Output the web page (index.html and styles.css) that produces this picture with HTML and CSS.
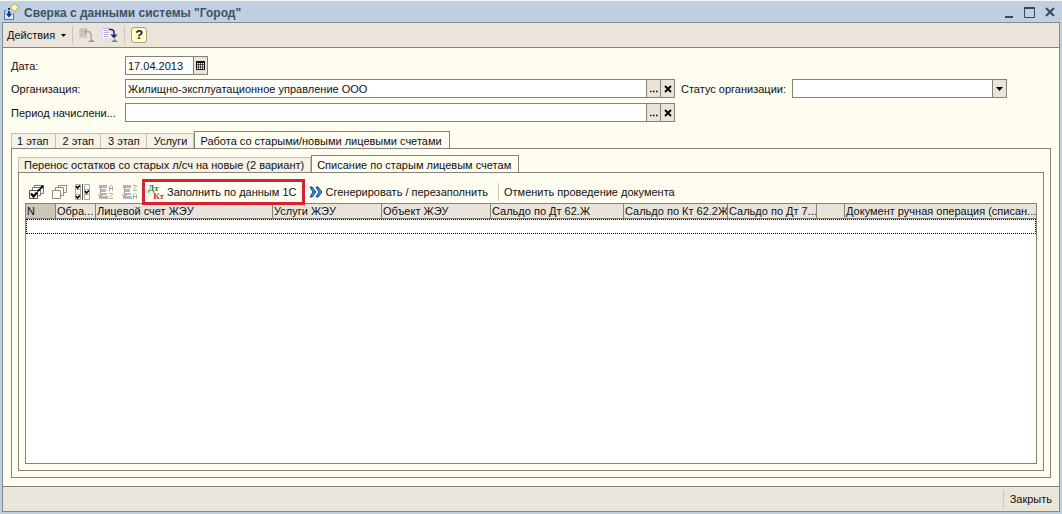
FILE: index.html
```
<!DOCTYPE html>
<html lang="ru">
<head>
<meta charset="utf-8">
<title>Сверка с данными системы "Город"</title>
<link rel="stylesheet" href="styles.css">
</head>
<body>
<div class="window">
  <header class="titlebar">
    <svg class="title-icon" width="18" height="18" viewBox="0 0 18 18" aria-hidden="true">
      <path d="M11.500 .5l4.500 4-4.500 4-4.500-4z" fill="#fbf8a0" stroke="#a8a36c"/>
      <path d="M3 7.500H1.500v9h9v-6" fill="none" stroke="#56779c"/>
      <path d="M2 10h8v6H2z" fill="#dfeaf7"/>
      <path d="M6 5v2M6 8v4" stroke="#0b3f8c" stroke-width="2"/>
      <path d="M2.500 10.500h7L6 14.500z" fill="#0b3f8c"/>
    </svg>
    <h1 class="title">Сверка с данными системы "Город"</h1>
    <button class="win-btn" aria-label="Свернуть"><svg width="12" height="12"><path d="M2 11h8" stroke="#37495a" stroke-width="2"/></svg></button>
    <button class="win-btn" aria-label="Развернуть"><svg width="12" height="12"><path d="M.5 2v9.500h10V2" fill="none" stroke="#37495a"/><path d="M0 2h11" stroke="#37495a" stroke-width="2"/></svg></button>
    <button class="win-btn" aria-label="Закрыть окно"><svg width="12" height="12"><path d="M1 2l8 8M9 2l-8 8" stroke="#37495a" stroke-width="2"/></svg></button>
  </header>
  <div class="frame">
    <div class="commandbar">
      <button class="menu-btn">Действия <svg width="5" height="3"><path d="M0 0h5L2.500 3z" fill="#000"/></svg></button>
      <span class="sep"></span>
      <button class="icon-btn" aria-label="Перейти назад" disabled>
        <svg width="16" height="16"><path d="M0 1h8v10H0z" fill="#d3cfca"/><path d="M1 2.500h5M1 4.500h3M1 6.500h5M1 8.500h6" stroke="#bdb9b6"/><path d="M6 4.500h2.500q3.500 0 3.500 3.500V12" fill="none" stroke="#aca7a5" stroke-width="1.500"/><path d="M8 1v7L4.500 4.500z" fill="#aca7a5"/><path d="M12.500 12l3.500 3H9z" fill="#a09b92"/></svg>
      </button>
      <button class="icon-btn" aria-label="Перейти">
        <svg width="16" height="16"><path d="M0 1h8v10H0z" fill="#fff"/><path d="M0 1.500h8M0 3.500h1m1 0h5M0 5.500h1m1 0h5M0 7.500h1m1 0h5M0 9.500h1m1 0h5" stroke="#b4b4d4"/><path d="M7 2.500h2q3 0 3 3V9" fill="none" stroke="#17278f" stroke-width="1.500"/><path d="M8.500 7.500h7L12 11.500z" fill="#17278f"/><path d="M12.500 12l3.500 3H9z" fill="#8a857a"/></svg>
      </button>
      <span class="sep"></span>
      <button class="help-btn" aria-label="Справка">?</button>
    </div>

    <main class="content">
      <form class="fields">
        <label class="label" for="date">Дата:</label>
        <div class="field date">
          <input id="date" type="text" value="17.04.2013">
          <button type="button" class="field-btn" aria-label="Календарь"><svg width="9" height="9"><path d="M.5 .5h8v8h-8z" fill="#fff" stroke="#111"/><path d="M0 1h9" stroke="#111" stroke-width="2"/><path d="M2.500 1v8M4.500 1v8M6.500 1v8M0 3.500h9M0 6h9" stroke="#111" stroke-width=".7"/></svg></button>
        </div>
        <label class="label row-org" for="org">Организация:</label>
        <div class="field">
          <input id="org" type="text" value="Жилищно-эксплуатационное управление ООО">
          <button type="button" class="field-btn" aria-label="Выбрать организацию"><svg width="8" height="9"><path d="M0 7.500h1.500M3 7.500h1.500M6 7.500h1.500" stroke="#000" stroke-width="1.500"/></svg></button>
          <button type="button" class="field-btn" aria-label="Очистить организацию"><svg width="8" height="9"><path d="M1 2l6 6M7 2l-6 6" stroke="#000" stroke-width="1.800"/></svg></button>
        </div>
        <label class="label label-status" for="status">Статус организации:</label>
        <div class="field">
          <select id="status"><option></option></select>
          <span class="field-btn"><svg width="7" height="4"><path d="M0 0h7L3.500 4z" fill="#000"/></svg></span>
        </div>
        <label class="label row-period" for="period">Период начислени...</label>
        <div class="field">
          <input id="period" type="text" value="">
          <button type="button" class="field-btn" aria-label="Выбрать период"><svg width="8" height="9"><path d="M0 7.500h1.500M3 7.500h1.500M6 7.500h1.500" stroke="#000" stroke-width="1.500"/></svg></button>
          <button type="button" class="field-btn" aria-label="Очистить период"><svg width="8" height="9"><path d="M1 2l6 6M7 2l-6 6" stroke="#000" stroke-width="1.800"/></svg></button>
        </div>
      </form>

      <div class="tabs" role="tablist">
        <button class="tab" role="tab">1 этап</button>
        <button class="tab" role="tab">2 этап</button>
        <button class="tab" role="tab">3 этап</button>
        <button class="tab" role="tab">Услуги</button>
        <button class="tab active" role="tab" aria-selected="true">Работа со старыми/новыми лицевыми счетами</button>
      </div>
      <section class="pane">
        <div class="tabs" role="tablist">
          <button class="tab" role="tab">Перенос остатков со старых л/сч на новые (2 вариант)</button>
          <button class="tab active" role="tab" aria-selected="true">Списание по старым лицевым счетам</button>
        </div>
        <section class="pane inner">
          <div class="toolbar">
            <button class="icon-btn" aria-label="Установить флажки">
              <svg width="16" height="16"><path d="M6.500 1.500h9v8h-9z" fill="#fff" stroke="#777"/><path d="M4.500 3.500h8v8h-8z" fill="#fff" stroke="#777"/><path d="M1.500 6.500h8v8h-8z" fill="#fff" stroke="#555"/><path d="M3 9.500l2.500 3L9 8.500M10 7l2-2M12.500 4.500L15 2" fill="none" stroke="#000" stroke-width="2.200"/></svg>
            </button>
            <button class="icon-btn" aria-label="Снять флажки">
              <svg width="16" height="16" fill="#fffcf0" stroke="#8c8c88"><path d="M7.500 1.500h8v7h-8z"/><path d="M4.500 3.500h8v8h-8z"/><path d="M1.500 6.500h8v8h-8z"/></svg>
            </button>
            <button class="icon-btn" aria-label="Инвертировать флажки">
              <svg width="16" height="16"><path d="M1.500 .5h5v5h-5zM1.500 5.500h5v5h-5zM1.500 10.500h5v5h-5zM10.500 .5h5v5h-5zM10.500 5.500h5v5h-5zM10.500 10.500h5v5h-5z" fill="#fff" stroke="#a8a8a4"/><path d="M8.500 0v16" stroke="#555"/><path d="M2 2l1.500 2L6 1.500M2 12l1.500 2L6 11.500M11 7l1.500 2L15 6.500" fill="none" stroke="#000" stroke-width="1.500"/></svg>
            </button>
            <button class="icon-btn" aria-label="Сортировать по возрастанию" disabled>
              <svg width="17" height="16"><path d="M2 1h8v3H2zM3 5h6v3H3zM3 9h7v2H3zM2 12h9v3H2z" fill="#b4b4be"/><path d="M3.500 1v11M1 10l2.500 3L6 10" stroke="#a0a0ac" fill="none"/><path d="M12.500 7V2.500l1-1h1l1 1V7M12.500 4.500h3M12 9.500h3.500v1l-3 3v1H16" fill="none" stroke="#aeaaa6"/></svg>
            </button>
            <button class="icon-btn" aria-label="Сортировать по убыванию" disabled>
              <svg width="17" height="16"><path d="M2 1h8v3H2zM3 5h6v3H3zM3 9h7v2H3zM2 12h9v3H2z" fill="#b4b4be"/><path d="M3.500 1v11M1 10l2.500 3L6 10" stroke="#a0a0ac" fill="none"/><path d="M12 1.500h3.500v1l-3 3v1H16M12.500 15v-4.500l1-1h1l1 1V15M12.500 12.500h3" fill="none" stroke="#aeaaa6"/></svg>
            </button>
            <button class="text-btn highlight">
              <span class="dtkt" aria-hidden="true"><b class="dt">Дт</b><b class="kt">Кт</b></span>
              Заполнить по данным 1С
            </button>
            <button class="text-btn generate">
              <svg width="14" height="12"><path d="M1 1h2l4 5-4 5H1l3-5zM7 1h2l4 5-4 5H7l3-5z" fill="#2f9be0" stroke="#123a83"/></svg>
              Сгенерировать / перезаполнить
            </button>
            <span class="sep"></span>
            <button class="text-btn">Отменить проведение документа</button>
          </div>
          <div class="grid">
            <table class="table">
              <colgroup><col class="c-n"><col class="c-img"><col class="c-acc"><col class="c-mid"><col class="c-mid"><col class="c-dt"><col class="c-kt"><col class="c-dt7"><col class="c-gap"><col></colgroup>
              <thead><tr>
                <th class="current">N</th><th>Обра...</th><th>Лицевой счет ЖЭУ</th><th>Услуги ЖЭУ</th><th>Объект ЖЭУ</th><th>Сальдо по Дт 62.Ж</th><th>Сальдо по Кт 62.2Ж</th><th>Сальдо по Дт 7...</th><th></th><th>Документ ручная операция (списан...</th>
              </tr></thead>
              <tbody><tr><td colspan="10"></td></tr></tbody>
            </table>
          </div>
        </section>
      </section>
    </main>

    <footer class="footer">
      <span class="sep"></span>
      <button class="text-btn">Закрыть</button>
    </footer>
  </div>
</div>
</body>
</html>
```
FILE: styles.css
```
* { box-sizing: border-box; }

body {
  margin: 0;
  background: #c2d0de;
  color: #111;
  font: 11px/14px "Liberation Sans", Arial, sans-serif;
}

button, input, select {
  margin: 0;
  padding: 0;
  border: 0;
  border-radius: 0;
  background: none;
  color: inherit;
  font: inherit;
}

svg { display: block; flex: none; }

.window {
  display: flex;
  flex-direction: column;
  min-height: 100vh;
  padding: 0 2px 2px;
  border-top: 1px solid #f4f6f8;
  background: #c0cfdc;
}

.titlebar {
  display: flex;
  align-items: center;
  height: 21px;
  padding: 0 3px 0 1px;
  background: #c0d0e2;
}

.title {
  flex: 1;
  margin: 0 0 0 3px;
  padding-top: 2px;
  color: #3f5163;
  font-size: 12px;
  font-weight: bold;
}

.win-btn { margin-left: 9px; }

.frame {
  display: flex;
  flex: 1;
  flex-direction: column;
  border: 1px solid #7e8b90;
  background: #fffcf0;
}

.commandbar {
  display: flex;
  align-items: center;
  height: 25px;
  padding: 0 4px;
  border-bottom: 1px solid #85827a;
  background: #ebe4da;
}

.menu-btn { display: flex; align-items: center; gap: 6px; }

.sep {
  width: 1px;
  height: 18px;
  margin: 0 5px;
  background: #cbc6b8;
}

.icon-btn + .icon-btn { margin-left: 7px; }
.commandbar .sep { margin: 0 6px; }

.help-btn {
  width: 16px;
  height: 16px;
  border: 1px solid #a5a284;
  border-radius: 3px;
  background: #fffec4;
  color: #15154a;
  font-size: 13px;
  font-weight: bold;
}

.content {
  display: flex;
  flex: 1;
  flex-direction: column;
  padding: 8px 8px;
}

.fields {
  display: grid;
  grid-template-columns: 114px minmax(0, 550fr) 117px minmax(0, 215fr);
  grid-template-rows: 19px 20px 19px;
  row-gap: 4px;
  padding-right: 44px;
}

.label { line-height: 21px; white-space: nowrap; }
.label-status { padding-left: 6px; }
.row-org, .row-period { grid-column: 1; }

.field {
  display: flex;
  height: 19px;
  border: 1px solid #85827a;
  background: #fff;
}

.date { justify-self: start; width: 83px; }

.field input, .field select {
  flex: 1;
  min-width: 0;
  padding: 0 2px;
  appearance: none;
  outline: 0;
}

.field-btn {
  display: flex;
  align-items: center;
  justify-content: center;
  width: 14px;
  border-left: 1px solid #85827a;
  background: #e8e4d9;
}

.tabs {
  display: flex;
  align-items: flex-end;
  height: 18px;
  margin-bottom: -1px;
}

.fields + .tabs { margin-top: 9px; }

.tab {
  height: 16px;
  padding: 1px 6px 0 7px;
  border: 1px solid #c5c1b3;
  border-bottom-color: #85827a;
  border-left-width: 0;
  background: #f6f2e6;
  line-height: 13px;
  white-space: nowrap;
}

.tab:first-child { padding-left: 5px; border-left-width: 1px; }

.tab.active {
  height: 18px;
  padding: 2px 7px 0 5px;
  border-color: #85827a;
  border-bottom-color: #fffcf0;
  border-left-width: 1px;
  background: #fffcf0;
}

.pane {
  display: flex;
  flex: 1;
  flex-direction: column;
  padding: 6px;
  border: 1px solid #85827a;
}

.toolbar {
  display: flex;
  align-items: center;
  height: 24px;
  padding: 2px 0 0 3px;
}

.text-btn { display: flex; align-items: center; white-space: nowrap; }

.highlight {
  position: relative;
  z-index: 1;
  gap: 3px;
  height: 20px;
  margin-left: 7px;
  padding: 0 6px 0 3px;
  outline: 3px solid #d5232f;
}

.dtkt {
  display: flex;
  flex-direction: column;
  width: 16px;
  font: bold 9px/8px "Liberation Serif", serif;
}

.dt { align-self: flex-start; color: #2e7d1c; }
.kt { align-self: flex-end; color: #d2323a; }

.generate { gap: 2px; margin: 0 5px 0 7px; }

.grid {
  flex: 1;
  border: 1px solid #85827a;
  background: #fff;
}

.table {
  width: 100%;
  border-collapse: separate;
  border-spacing: 0;
  table-layout: fixed;
}

.c-n { width: 30px; }
.c-img { width: 40px; }
.c-acc { width: 177px; }
.c-mid { width: 109px; }
.c-dt { width: 133px; }
.c-kt { width: 104px; }
.c-dt7 { width: 89px; }
.c-gap { width: 28px; }

th {
  height: 15px;
  padding: 1px 0 0 1px;
  overflow: hidden;
  border-right: 1px solid #85827a;
  border-bottom: 1px solid #85827a;
  background: #e9e4db;
  font-weight: normal;
  line-height: 13px;
  text-align: left;
  white-space: nowrap;
}

th:last-child { border-right: 0; }
.current { background: #cdc7b9; }

td { height: 15px; padding: 0; border: 1px dotted #000; }

.footer {
  display: flex;
  align-items: center;
  justify-content: flex-end;
  height: 25px;
  padding-right: 7px;
  border-top: 1px solid #85827a;
  background: #e9e5da;
}

.footer .sep { margin: 0 6px; }
```
